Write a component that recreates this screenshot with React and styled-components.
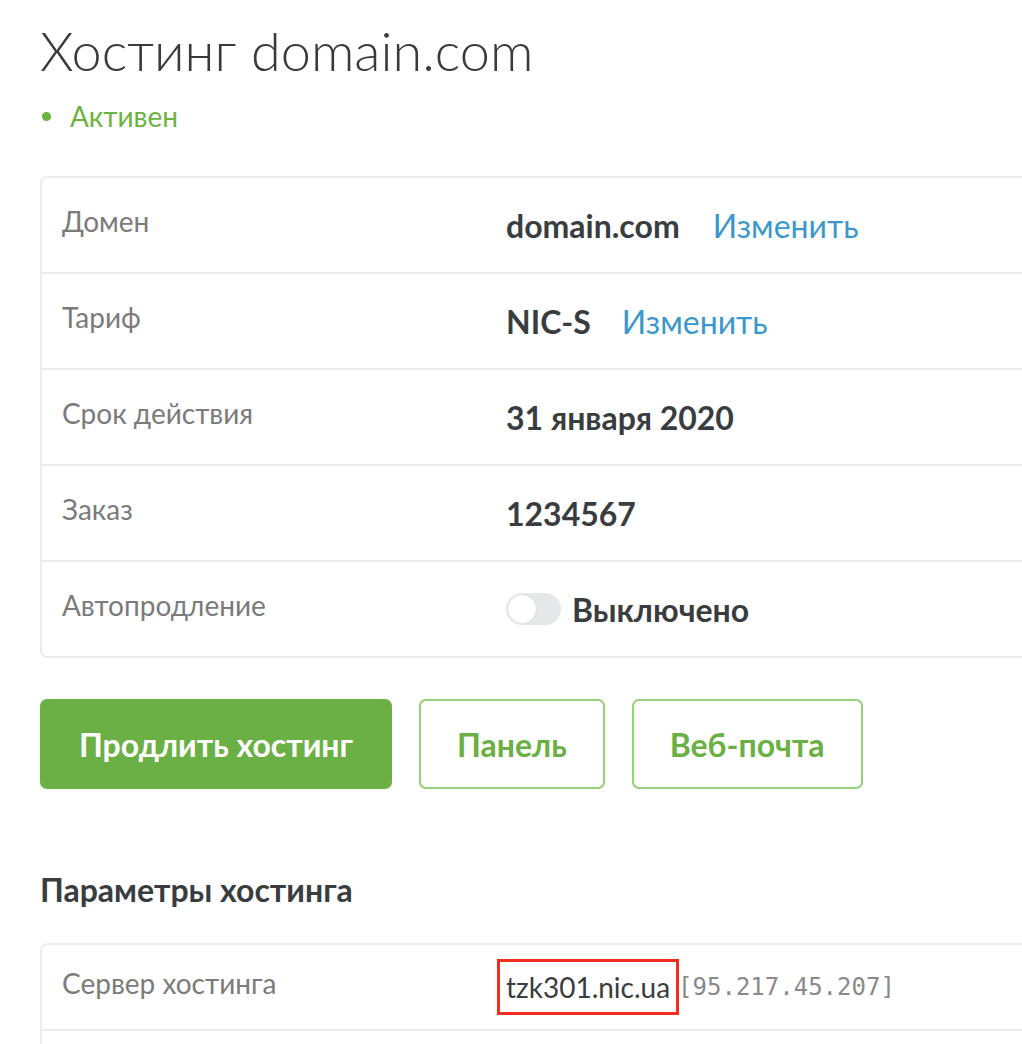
import React from 'react';
import styled, { createGlobalStyle } from 'styled-components';

const GlobalStyle = createGlobalStyle`
  html, body {
    margin: 0;
    padding: 0;
    background: #fff;
    overflow: hidden;
  }
  body {
    font-family: Lato, "Open Sans", sans-serif;
    color: #3a3d40;
  }
`;

const Page = styled.div`
  padding: 20px 0 0 40px;
  width: 1060px;
`;

const Title = styled.h1`
  margin: 0;
  font-size: 54px;
  font-weight: 300;
  line-height: 62px;
  color: #3a3a3a;
`;

const Status = styled.div`
  display: flex;
  align-items: center;
  gap: 19px;
  margin-top: 18px;
  font-size: 28px;
  line-height: 32px;
  color: #6cb33f;

  &::before {
    content: '';
    width: 9px;
    height: 9px;
    border-radius: 50%;
    margin-left: 2px;
    background: #6cb33f;
  }
`;

const Table = styled.div`
  border: 2px solid #ececec;
  border-radius: 7px;
  margin-top: ${p => p.$top}px;
`;

const Row = styled.div`
  display: grid;
  grid-template-columns: 444px 1fr;
  align-items: center;
  height: ${p => p.$h || 94}px;
  padding-left: 20px;

  & + & {
    border-top: 2px solid #ececec;
  }
`;

const Label = styled.div`
  font-size: 28px;
  color: #7b7b7b;
  margin-top: -8px;
`;

const Value = styled.div`
  display: flex;
  align-items: center;
  font-size: 32px;
  font-weight: 700;
  color: #3a3d40;
`;

const Link = styled.a`
  margin-left: ${p => p.$gap}px;
  font-size: 32px;
  font-weight: 400;
  color: #3b97cc;
  text-decoration: none;
  cursor: pointer;
`;

const Toggle = styled.span`
  position: relative;
  width: 55px;
  height: 32px;
  border-radius: 16px;
  background: #e6e7e9;
  margin-right: 11px;

  &::after {
    content: '';
    position: absolute;
    left: 2px;
    top: 2px;
    width: 28px;
    height: 28px;
    border-radius: 50%;
    background: #fff;
    box-shadow: 0 0 1px rgba(0, 0, 0, 0.2);
  }
`;

const Buttons = styled.div`
  display: flex;
  gap: 27px;
  margin-top: 41px;
`;

const Button = styled.button`
  height: 90px;
  padding: 0 ${p => p.$pad}px;
  border-radius: 7px;
  font-family: Lato, "Open Sans", sans-serif;
  font-size: 32px;
  font-weight: 700;
  cursor: pointer;
  border: 2px solid ${p => (p.$primary ? '#6ab045' : '#94d17a')};
  background: ${p => (p.$primary ? '#6ab045' : '#fff')};
  color: ${p => (p.$primary ? '#fff' : '#6ab045')};
`;

const Section = styled.h2`
  margin: 82px 0 0;
  font-size: 32px;
  font-weight: 700;
  line-height: 38px;
  color: #3a3d40;
`;

const Server = styled.span`
  position: relative;
  font-size: 28px;
  font-weight: 400;
  color: #3a3d40;

  &::after {
    content: '';
    position: absolute;
    left: -9px;
    right: -9px;
    top: -11px;
    bottom: -11px;
    border: 3px solid #f22c1e;
  }
`;

const Ip = styled.span`
  margin-left: 8px;
  font-family: "DejaVu Sans Mono", "Liberation Mono", monospace;
  font-size: 24px;
  font-weight: 400;
  color: #8a8a8a;
`;

const rows = [
  { label: 'Домен', value: 'domain.com', link: 33 },
  { label: 'Тариф', value: 'NIC-S', link: 31 },
  { label: 'Срок действия', value: '31 января 2020' },
  { label: 'Заказ', value: '1234567' },
];

export default function App() {
  return (
    <Page>
      <GlobalStyle />
      <Title>Хостинг domain.com</Title>
      <Status>Активен</Status>

      <Table $top={44}>
        {rows.map(r => (
          <Row key={r.label}>
            <Label>{r.label}</Label>
            <Value>
              {r.value}
              {r.link && <Link $gap={r.link}>Изменить</Link>}
            </Value>
          </Row>
        ))}
        <Row>
          <Label>Автопродление</Label>
          <Value>
            <Toggle />
            Выключено
          </Value>
        </Row>
      </Table>

      <Buttons>
        <Button $primary $pad={37}>Продлить хостинг</Button>
        <Button $pad={36}>Панель</Button>
        <Button $pad={36}>Веб-почта</Button>
      </Buttons>

      <Section>Параметры хостинга</Section>

      <Table $top={34}>
        <Row $h={84}>
          <Label>Сервер хостинга</Label>
          <Value>
            <Server>tzk301.nic.ua</Server>
            <Ip>[95.217.45.207]</Ip>
          </Value>
        </Row>
        <Row />
      </Table>
    </Page>
  );
}
